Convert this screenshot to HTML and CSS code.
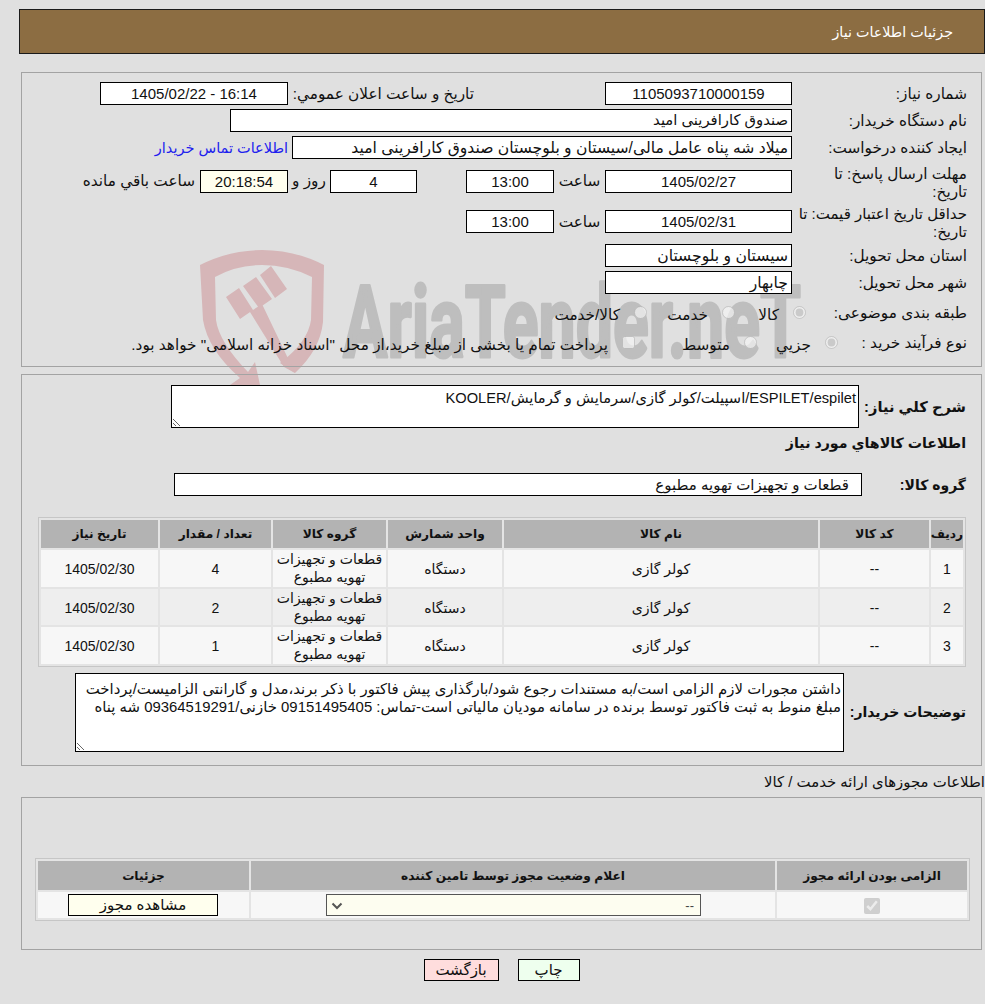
FILE: index.html
```
<!DOCTYPE html>
<html lang="fa" dir="rtl">
<head>
<meta charset="utf-8">
<title>جزئیات اطلاعات نیاز</title>
<link rel="stylesheet" href="styles.css">
</head>
<body>
<svg class="watermark" width="640" height="150" viewBox="0 0 640 150" aria-hidden="true">
  <path class="wm-red" fill-rule="evenodd" d="M0 15 Q30 0 62 0 Q95 0 124 15 L123 72 Q120 100 95 123 L80 113 Q108 92 111 70 L112 27 Q88 15 62 15 Q36 15 15 27 L16 70 Q19 92 48 122 L55 112 L60 135 L30 135 L40 128 Q8 100 3 70 Z"/>
  <path class="wm-red" d="M26 47 L39 38 L53 60 L40 69 Z M43 36 L56 27 L72 49 L59 58 Z M60 25 L71 16 L87 39 L75 48 Z M50 62 L62 54 L95 123 L84 117 Z"/>
  <text class="wm-grey" x="143" y="107" textLength="458" lengthAdjust="spacingAndGlyphs">AriaTender.neT</text>
</svg>

<main class="page">
  <header class="page-title">جزئیات اطلاعات نیاز</header>

  <section class="panel panel-form">
    <div class="row">
      <div class="lbl">شماره نیاز:</div>
      <div class="val">
        <div class="field w187">1105093710000159</div>
        <div class="lbl-inline w317">تاریخ و ساعت اعلان عمومي:</div>
        <div class="field w188" dir="ltr">1405/02/22 - 16:14</div>
      </div>
    </div>
    <div class="row">
      <div class="lbl">نام دستگاه خریدار:</div>
      <div class="val"><div class="field w562 start">صندوق کارافرینی امید</div></div>
    </div>
    <div class="row">
      <div class="lbl">ایجاد کننده درخواست:</div>
      <div class="val">
        <div class="field w500 start">میلاد شه پناه عامل مالی/سیستان و بلوچستان صندوق کارافرینی امید</div>
        <a class="contact" href="#">اطلاعات تماس خریدار</a>
      </div>
    </div>
    <div class="row row-tall">
      <div class="lbl lbl-two">مهلت ارسال پاسخ: تا<br>تاریخ:</div>
      <div class="val">
        <div class="field w187">1405/02/27</div>
        <div class="unit w51">ساعت</div>
        <div class="field w88">13:00</div>
        <div class="spacer49"></div>
        <div class="field w87">4</div>
        <div class="unit w42">روز و</div>
        <div class="field w88 cream">20:18:54</div>
        <div class="remain">ساعت باقي مانده</div>
      </div>
    </div>
    <div class="row row-tall row-tall2">
      <div class="lbl lbl-two lbl-tight">حداقل تاریخ اعتبار قیمت: تا<br>تاریخ:</div>
      <div class="val">
        <div class="field w187">1405/02/31</div>
        <div class="unit w51">ساعت</div>
        <div class="field w88">13:00</div>
      </div>
    </div>
    <div class="row">
      <div class="lbl">استان محل تحویل:</div>
      <div class="val"><div class="field w187 start">سیستان و بلوچستان</div></div>
    </div>
    <div class="row row-after">
      <div class="lbl">شهر محل تحویل:</div>
      <div class="val"><div class="field w187 start">چابهار</div></div>
    </div>
    <div class="row row-opts">
      <div class="lbl">طبقه بندی موضوعی:</div>
      <div class="val opts opts-a">
        <label class="opt w71"><input type="radio" name="cat" checked disabled><span>کالا</span></label>
        <label class="opt w88"><input type="radio" name="cat" disabled><span>خدمت</span></label>
        <label class="opt"><input type="radio" name="cat" disabled><span>کالا/خدمت</span></label>
      </div>
    </div>
    <div class="row row-opts">
      <div class="lbl">نوع فرآیند خرید :</div>
      <div class="val opts opts-b">
        <label class="opt w81"><input type="radio" name="kind" checked disabled><span>جزیي</span></label>
        <label class="opt w122"><input type="radio" name="kind" disabled><span>متوسط</span></label>
        <label class="opt"><input type="checkbox" disabled><span>پرداخت تمام یا بخشی از مبلغ خرید،از محل "اسناد خزانه اسلامی" خواهد بود.</span></label>
      </div>
    </div>
  </section>

  <section class="panel panel-items">
    <div class="desc-row">
      <div class="blbl blbl-wide">شرح کلي نیاز:</div>
      <textarea class="area area-a" readonly>ESPILET/espilet/اسپیلت/کولر گازی/سرمایش و گرمایش/KOOLER</textarea>
    </div>
    <h2 class="blbl heading">اطلاعات کالاهاي مورد نیاز</h2>
    <div class="group-row">
      <div class="blbl">گروه کالا:</div>
      <div class="field w688 group">قطعات و تجهیزات تهویه مطبوع</div>
    </div>
    <table class="grid items">
      <colgroup><col class="c1"><col class="c2"><col class="c3"><col class="c4"><col class="c5"><col class="c6"><col class="c7"></colgroup>
      <thead>
        <tr><th>ردیف</th><th>کد کالا</th><th>نام کالا</th><th>واحد شمارش</th><th>گروه کالا</th><th>تعداد / مقدار</th><th>تاریخ نیاز</th></tr>
      </thead>
      <tbody>
        <tr><td>1</td><td>--</td><td>کولر گازی</td><td>دستگاه</td><td>قطعات و تجهیزات<br>تهویه مطبوع</td><td>4</td><td>1405/02/30</td></tr>
        <tr><td>2</td><td>--</td><td>کولر گازی</td><td>دستگاه</td><td>قطعات و تجهیزات<br>تهویه مطبوع</td><td>2</td><td>1405/02/30</td></tr>
        <tr><td>3</td><td>--</td><td>کولر گازی</td><td>دستگاه</td><td>قطعات و تجهیزات<br>تهویه مطبوع</td><td>1</td><td>1405/02/30</td></tr>
      </tbody>
    </table>
    <div class="notes-row">
      <div class="blbl">توضیحات خریدار:</div>
      <textarea class="area area-b" readonly>داشتن مجورات لازم الزامی است/به مستندات رجوع شود/بارگذاری پیش فاکتور با ذکر برند،مدل و گارانتی الزامیست/پرداخت مبلغ منوط به ثبت فاکتور توسط برنده در سامانه مودیان مالیاتی است-تماس: 09151495405 خازنی/09364519291 شه پناه</textarea>
    </div>
  </section>

  <h3 class="sub-title">اطلاعات مجوزهای ارائه خدمت / کالا</h3>

  <section class="panel panel-lic">
    <table class="grid lic">
      <colgroup><col class="l1"><col class="l2"><col class="l3"></colgroup>
      <thead><tr><th>الزامی بودن ارائه مجوز</th><th>اعلام وضعیت مجوز توسط تامین کننده</th><th>جزئیات</th></tr></thead>
      <tbody>
        <tr>
          <td><input class="lic-check" type="checkbox" checked disabled></td>
          <td><select class="lic-select" disabled><option>--</option></select></td>
          <td><button class="lic-btn" type="button">مشاهده مجوز</button></td>
        </tr>
      </tbody>
    </table>
  </section>

  <div class="actions">
    <button class="btn btn-print" type="button">چاپ</button>
    <button class="btn btn-back" type="button">بازگشت</button>
  </div>
</main>
</body>
</html>
```

FILE: styles.css
```
* { box-sizing: border-box; }
html, body { margin: 0; padding: 0; }
body {
  position: relative;
  width: 985px;
  height: 1004px;
  overflow: hidden;
  background: #e0e0e0;
  color: #111;
  font-family: "Liberation Sans", "DejaVu Sans", sans-serif;
  font-size: 15.3px;
}
.watermark { position: absolute; left: 200px; top: 250px; z-index: 0; direction: ltr; }
.wm-red { fill: #d6b6b8; }
.wm-grey {
  fill: #bebebe;
  stroke: #bebebe;
  stroke-width: 3px;
  stroke-linejoin: round;
  font-family: "Roboto", "Liberation Sans", sans-serif;
  font-weight: 700;
  font-size: 100px;
}

.page { position: relative; z-index: 1; padding-top: 9px; }
.page-title {
  margin-left: 19px;
  height: 45px;
  line-height: 45px;
  padding-right: 31px;
  background: #8c6d42;
  border: 1px solid #1a1a1a;
  color: #fff;
  font-size: 14.3px;
}
.panel { margin-left: 21px; margin-right: 3px; border: 1px solid #a3a3a3; }
.panel-form { margin-top: 18px; height: 295px; padding-top: 9px; }
.panel-items { margin-top: 7px; height: 392px; padding-top: 10px; }
.panel-lic { margin-top: 6px; height: 153px; padding-top: 60px; }

.row { display: grid; grid-template-columns: 189px 1fr; height: 23px; margin-bottom: 4px; align-items: center; }
.lbl { padding-right: 14px; line-height: 18px; white-space: nowrap; }
.val { display: flex; align-items: center; }
.row-tall { height: 40px; margin-top: -2px; margin-bottom: 0; }
.row-tall2 { height: 41px; margin-top: 0; margin-bottom: 2px; }
.lbl-two { align-self: start; margin-top: 4px; }
.lbl-tight { font-size: 15px; }
.row-after { margin-bottom: 6px; }
.row-opts { height: 26px; margin-bottom: 4px; }

.field {
  height: 23px;
  line-height: 21px;
  background: #fff;
  border: 1px solid #000;
  text-align: center;
  white-space: nowrap;
  overflow: hidden;
  flex: none;
  font-size: 15px;
}
.start { text-align: right; padding-right: 3px; font-size: 15.6px; }
.cream { background: #ffffee; }
.w187 { width: 187px; }
.w188 { width: 188px; }
.w562 { width: 562px; font-size: 14.8px; }
.w500 { width: 500px; }
.w88 { width: 88px; }
.w87 { width: 87px; }
.w688 { width: 688px; }
.lbl-inline { flex: none; padding-right: 131px; white-space: nowrap; }
.w317 { width: 317px; }
.unit { flex: none; text-align: center; }
.w51 { width: 51px; }
.w42 { width: 42px; }
.spacer49 { width: 49px; flex: none; }
.remain { margin-right: 5px; white-space: nowrap; }
.contact { margin-right: 4px; color: #2020ee; text-decoration: none; white-space: nowrap; font-size: 14.5px; }

.opts { align-self: stretch; align-items: flex-start; }
.opts-a { margin-right: -14px; }
.opts-b { margin-right: -46px; }
.opt { display: flex; align-items: flex-start; flex: none; white-space: nowrap; }
.opt input { margin: 6px 0 0 14px; width: 13px; height: 13px; flex: none; }
.opt span { margin-top: 6px; line-height: 18px; }
.w71 { width: 71px; }
.w88.opt { width: 88px; }
.w81 { width: 81px; }
.w122 { width: 122px; }

.blbl { font-weight: 700; margin: 0; font-size: 14px; white-space: nowrap; }
.blbl-wide { font-size: 14.67px; }
.desc-row { display: flex; align-items: center; height: 43px; padding-right: 15px; }
.desc-row .blbl { margin-left: auto; }
.area {
  display: block;
  background: #fff;
  border: 1px solid #000;
  border-radius: 0;
  padding: 2px;
  font-family: inherit;
  color: #111;
  line-height: 18px;
  outline: none;
}
.area-a { width: 688px; height: 43px; margin-left: 149px; padding-top: 3px; font-size: 14.67px; }
.heading { margin: 6px 15px 0 0; line-height: 18px; height: 18px; font-size: 14.2px; }
.group-row { display: flex; align-items: center; margin-top: 21px; height: 23px; padding-right: 15px; }
.group-row .blbl { margin-left: auto; }
.group { text-align: right; padding-right: 12px; margin-left: 152px; }
.grid { border-collapse: separate; border-spacing: 2px; table-layout: fixed; background: #e4e4e4; border: 1px solid #c6c6c6; }
.grid th { background: #b3b3b3; font-size: 12.2px; font-weight: 700; padding: 0; }
.grid td { background: #f7f7f7; text-align: center; padding: 0; line-height: 18px; font-size: 14px; }
.grid tbody tr:nth-child(2) td { background: #eeeeee; }

.items { width: 928px; margin: 21px 15px 0 0; }
.items thead tr { height: 28px; }
.items tbody tr { height: 36.5px; }
.items td:not(:nth-child(5)) { padding-top: 2px; }
.c1 { width: 32px; }
.c2 { width: 109px; }
.c3 { width: 314px; }
.c4 { width: 114px; }
.c5 { width: 113px; }
.c6 { width: 111px; }
.c7 { width: 117px; }

.notes-row { display: flex; align-items: center; margin-top: 6px; height: 79px; padding-right: 15px; }
.notes-row .blbl { margin-left: auto; }
.area-b { width: 769px; height: 79px; margin-left: 53px; padding: 6px 2px 2px; font-size: 14.9px; }

.sub-title { margin: 7px 0 0; font-size: 14.9px; font-weight: 400; line-height: 18px; height: 18px; }

.lic { width: 935px; margin: 0 11px 0 0; }
.lic thead tr { height: 29px; }
.lic tbody tr { height: 26px; }
.l1 { width: 190px; }
.l2 { width: 524px; }
.l3 { width: 211px; }
.lic-check { width: 16px; height: 16px; margin: 0; vertical-align: middle; }
.lic-select {
  display: block;
  width: 375px;
  height: 22px;
  margin-right: 74px;
  padding: 0 6px 0 0;
  appearance: none;
  background-color: #fdfdf0;
  background-image: url("data:image/svg+xml,%3Csvg xmlns='http://www.w3.org/2000/svg' width='12' height='8' viewBox='0 0 12 8'%3E%3Cpath d='M1.5 1.5 L6 6 L10.5 1.5' fill='none' stroke='%23555' stroke-width='2'/%3E%3C/svg%3E");
  background-repeat: no-repeat;
  background-position: 4px 7px;
  border: 1px solid #555;
  border-radius: 0;
  opacity: 1;
  color: #444;
  font-family: inherit;
  font-size: 13px;
}
.lic-btn {
  display: block;
  width: 150px;
  height: 22px;
  margin: 0 31px 0 0;
  padding: 0;
  background: #ffffee;
  border: 1px solid #000;
  font-family: inherit;
  font-size: 15px;
  color: #111;
}
.actions { display: flex; justify-content: center; gap: 19px; margin-top: 9px; margin-left: 21px; margin-right: 3px; }
.btn { height: 22px; padding: 0; border: 1px solid #000; font-family: inherit; font-size: 15px; color: #111; }
.btn-print { width: 62px; background: #eeffee; }
.btn-back { width: 75px; background: #ffdddd; }
```
